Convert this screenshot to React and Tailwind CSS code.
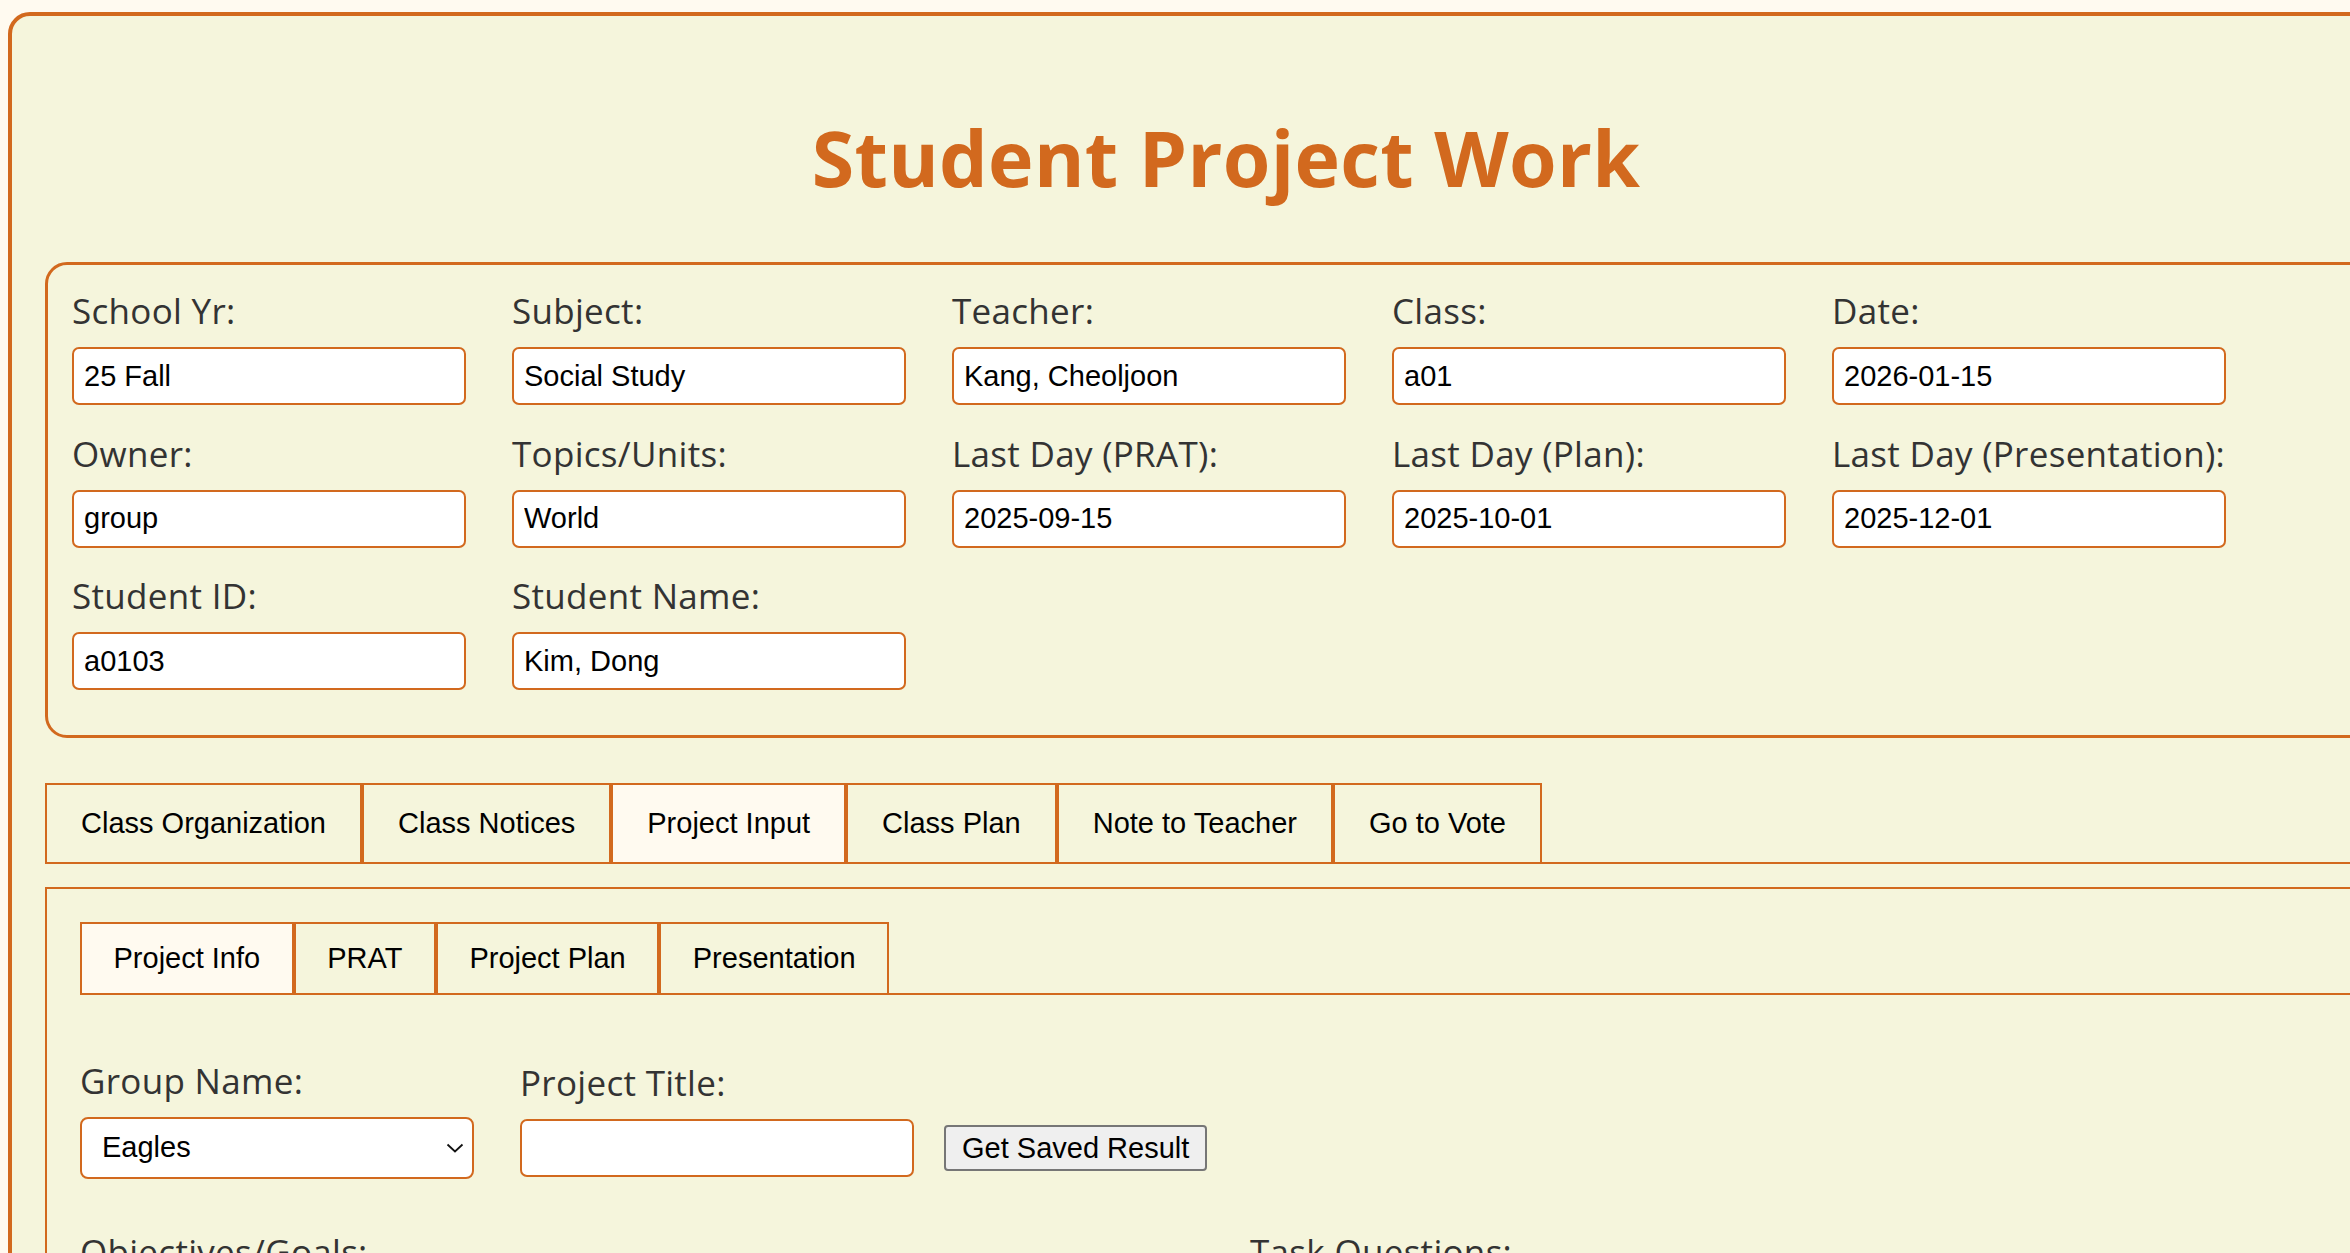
import React from 'react';

const infoFields = [
  ['School Yr:', '25 Fall'],
  ['Subject:', 'Social Study'],
  ['Teacher:', 'Kang, Cheoljoon'],
  ['Class:', 'a01'],
  ['Date:', '2026-01-15'],
  ['Owner:', 'group'],
  ['Topics/Units:', 'World'],
  ['Last Day (PRAT):', '2025-09-15'],
  ['Last Day (Plan):', '2025-10-01'],
  ['Last Day (Presentation):', '2025-12-01'],
  ['Student ID:', 'a0103'],
  ['Student Name:', 'Kim, Dong'],
];

const mainTabs = ['Class Organization', 'Class Notices', 'Project Input', 'Class Plan', 'Note to Teacher', 'Go to Vote'];
const subTabs = ['Project Info', 'PRAT', 'Project Plan', 'Presentation'];

const labelCls = "block h-[40px] leading-[40px] text-[35px] text-[#333] mb-[16px] whitespace-nowrap tracking-[0.3px] font-['Open_Sans',sans-serif]";
const inputCls = "w-[394px] h-[58px] border-2 border-[#d2691e] rounded-[7px] bg-white pl-[10px] text-[29px] text-black outline-none font-['Liberation_Sans',Arial,sans-serif]";

const Field = ({ label, value }) => (
  <div className="flex flex-col">
    <label className={labelCls}>{label}</label>
    <input type="text" readOnly defaultValue={value} className={inputCls} />
  </div>
);

const App = () => {
  return (
    <div className="w-[2350px] h-[1253px] overflow-hidden bg-[#fffaf0] pt-[12px] pl-[8px]">
      <div className="w-[2436px] border-4 border-[#d2691e] rounded-[22px] bg-[#f5f5dc] px-[33px] pb-[40px]">
        {/* Title */}
        <h1 className="mt-[103px] text-center text-[77px] leading-none font-bold tracking-[0.3px] text-[#d2691e] font-['Open_Sans',sans-serif]">
          Student Project Work
        </h1>

        {/* Student info panel */}
        <div className="mt-[66px] border-[3px] border-[#d2691e] rounded-[22px] pt-[26px] px-[24px] pb-[45px]">
          <div className="grid grid-cols-[repeat(5,394px)] gap-x-[46px] gap-y-[28.5px]">
            {infoFields.map(([label, value]) => (
              <Field key={label} label={label} value={value} />
            ))}
          </div>
        </div>

        {/* Main tabs */}
        <div className="mt-[45px] flex border-b-2 border-[#d2691e] font-['Liberation_Sans',Arial,sans-serif]">
          {mainTabs.map((tab) => (
            <button
              key={tab}
              className={
                tab === 'Project Input'
                  ? 'h-[79px] px-[34px] border-2 border-b-0 border-[#d2691e] bg-[#fffaf0] flex items-center text-[29px] text-black'
                  : 'h-[79px] px-[34px] border-2 border-b-0 border-[#d2691e] flex items-center text-[29px] text-black'
              }
            >
              {tab}
            </button>
          ))}
        </div>

        {/* Tab content */}
        <div className="mt-[23px] border-2 border-[#d2691e] p-[33px] h-[600px]">
          <div className="flex border-b-2 border-[#d2691e] font-['Liberation_Sans',Arial,sans-serif]">
            {subTabs.map((tab) => (
              <button
                key={tab}
                className={
                  tab === 'Project Info'
                    ? 'h-[71px] px-[31.5px] border-2 border-b-0 border-[#d2691e] bg-[#fffaf0] flex items-center text-[29px] text-black'
                    : 'h-[71px] px-[31.5px] border-2 border-b-0 border-[#d2691e] flex items-center text-[29px] text-black'
                }
              >
                {tab}
              </button>
            ))}
          </div>

          <div className="mt-[66px] flex items-end">
            <div className="flex flex-col">
              <label className={labelCls}>Group Name:</label>
              <div className="relative w-[394px] h-[62px]">
                <select
                  defaultValue="Eagles"
                  className="appearance-none w-full h-full border-2 border-[#d2691e] rounded-[8px] bg-white pl-[20px] text-[29px] text-black outline-none font-['Liberation_Sans',Arial,sans-serif]"
                >
                  <option>Eagles</option>
                  <option>Hawks</option>
                  <option>Owls</option>
                </select>
                <svg className="absolute right-[10px] top-[26px] pointer-events-none" width="18" height="10" viewBox="0 0 18 10">
                  <path d="M1.5 1.5 L9 8.5 L16.5 1.5" fill="none" stroke="#111" strokeWidth="1.8" />
                </svg>
              </div>
            </div>
            <div className="flex flex-col ml-[46px] mb-[2px]">
              <label className={labelCls}>Project Title:</label>
              <input type="text" readOnly defaultValue="" className={inputCls} />
            </div>
            <button className="ml-[30px] mb-[8px] h-[46px] px-[16px] bg-[#efefef] border-2 border-[#767676] rounded-[4px] text-[29px] text-black font-['Liberation_Sans',Arial,sans-serif]">
              Get Saved Result
            </button>
          </div>

          <div className="mt-[53px] grid grid-cols-[1170px_1170px]">
            <div className="flex flex-col">
              <label className={labelCls}>Objectives/Goals:</label>
              <textarea readOnly className="w-[1100px] h-[200px] border-2 border-[#d2691e] rounded-[7px] bg-white" />
            </div>
            <div className="flex flex-col">
              <label className={labelCls}>Task Questions:</label>
              <textarea readOnly className="w-[1100px] h-[200px] border-2 border-[#d2691e] rounded-[7px] bg-white" />
            </div>
          </div>
        </div>
      </div>
    </div>
  );
};

export default App;
